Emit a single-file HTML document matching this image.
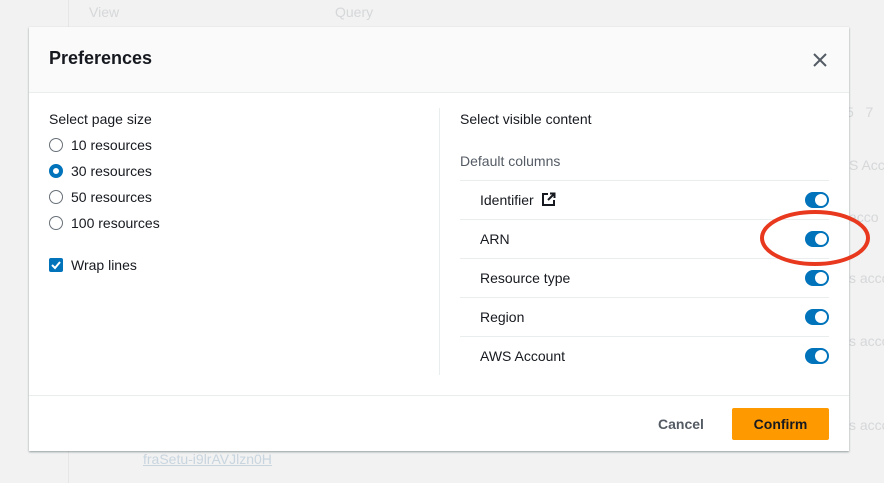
<!DOCTYPE html>
<html><head><style>
body{margin:0;width:884px;height:483px;background:#f2f2f2;font-family:"Liberation Sans",sans-serif;position:relative;overflow:hidden;color:#16191f}
.a{position:absolute;white-space:nowrap}
.bg{color:#d5d7d9;font-size:14px}
.modal{left:29px;top:27px;width:820px;height:424px;background:#fff;box-shadow:0 1px 2px rgba(0,28,36,.4)}
.hdr{left:0;top:0;width:820px;height:65px;background:#fafafa;border-bottom:1px solid #eaeded}
.t{font-size:14px}
.radio{width:12px;height:12px;border:1.5px solid #687078;border-radius:50%;background:#fff}
.radio.on{border:4px solid #0073bb;width:6px;height:6px}
.tg{width:24px;height:16px;border-radius:8px;background:#0073bb}
.tg:after{content:"";position:absolute;right:2px;top:2px;width:12px;height:12px;border-radius:50%;background:#fff}
.ln{height:1px;background:#eaeded;left:460px;width:369px}
</style></head><body>
<div class="a" style="left:68px;top:0;width:1px;height:483px;background:#e6e6e6"></div>
<div class="a bg" style="left:89px;top:4px">View</div>
<div class="a bg" style="left:335px;top:4px">Query</div>
<div class="a bg" style="left:846px;top:104px">5&nbsp;&nbsp;&nbsp;7</div>
<div class="a bg" style="left:849px;top:157px">S Acc</div>
<div class="a bg" style="left:849px;top:209px">acco</div>
<div class="a bg" style="left:849px;top:270px">s acco</div>
<div class="a bg" style="left:849px;top:333px">s acco</div>
<div class="a bg" style="left:849px;top:417px">s acco</div>
<div class="a" style="left:143px;top:451px;font-size:14px;color:#c8d5df;text-decoration:underline">fraSetu-i9lrAVJlzn0H</div>
<div class="a modal">
 <div class="a hdr"><div class="a" style="left:20px;top:21px;font-size:18px;font-weight:bold">Preferences</div>
 <svg class="a" style="left:783px;top:25px" width="16" height="16"><path d="M2 2L14 14M14 2L2 14" stroke="#545b64" stroke-width="2"/></svg></div>
 <div class="a" style="left:410px;top:81px;width:1px;height:267px;background:#eaeded"></div>
 <div class="a" style="left:0;top:368px;width:820px;height:1px;background:#eaeded"></div>
</div>
<div class="a t" style="left:49px;top:111px">Select page size</div>
<div class="a radio" style="left:49px;top:138px"></div><div class="a t" style="left:71px;top:137px">10 resources</div>
<div class="a radio on" style="left:49px;top:164px"></div><div class="a t" style="left:71px;top:163px">30 resources</div>
<div class="a radio" style="left:49px;top:190px"></div><div class="a t" style="left:71px;top:189px">50 resources</div>
<div class="a radio" style="left:49px;top:216px"></div><div class="a t" style="left:71px;top:215px">100 resources</div>
<svg class="a" style="left:49px;top:258px" width="14" height="14"><rect width="14" height="14" rx="2" fill="#0073bb"/><path d="M3 7l3 3 5-6" stroke="#fff" stroke-width="2" fill="none"/></svg>
<div class="a t" style="left:71px;top:257px">Wrap lines</div>
<div class="a t" style="left:460px;top:111px">Select visible content</div>
<div class="a t" style="left:460px;top:153px;color:#545b64">Default columns</div>
<div class="a ln" style="top:180px"></div><div class="a ln" style="top:219px"></div><div class="a ln" style="top:258px"></div><div class="a ln" style="top:297px"></div><div class="a ln" style="top:336px"></div>
<div class="a t" style="left:480px;top:192px">Identifier</div>
<svg class="a" style="left:541px;top:192px" width="15" height="15"><path d="M7 2H2v11h11V8M9 1.5h4.5V6M13.5 1.5L7 8" stroke="#16191f" stroke-width="2" fill="none"/></svg>
<div class="a t" style="left:480px;top:231px">ARN</div>
<div class="a t" style="left:480px;top:270px">Resource type</div>
<div class="a t" style="left:480px;top:309px">Region</div>
<div class="a t" style="left:480px;top:348px">AWS Account</div>
<div class="a tg" style="left:805px;top:192px"></div>
<div class="a tg" style="left:805px;top:231px"></div>
<div class="a tg" style="left:805px;top:270px"></div>
<div class="a tg" style="left:805px;top:309px"></div>
<div class="a tg" style="left:805px;top:348px"></div>
<svg class="a" style="left:755px;top:205px" width="120" height="70"><ellipse cx="60" cy="33" rx="53" ry="26" fill="none" stroke="#e8391f" stroke-width="4"/></svg>
<div class="a" style="left:658px;top:416px;font-size:14px;font-weight:bold;color:#545b64">Cancel</div>
<div class="a" style="left:732px;top:408px;width:97px;height:32px;background:#ff9900;border-radius:2px;font-size:14px;font-weight:bold;text-align:center;line-height:32px">Confirm</div>
</body></html>
